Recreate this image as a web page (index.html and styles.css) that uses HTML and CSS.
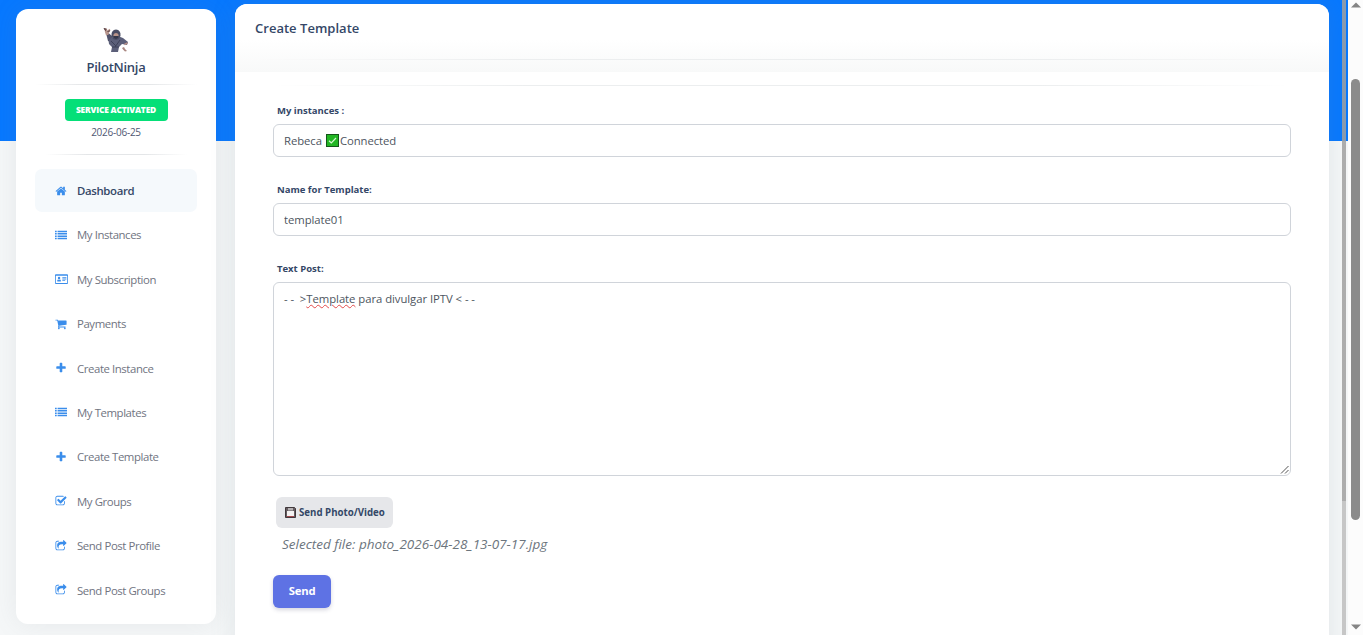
FILE: index.html
```html
<!DOCTYPE html>
<html lang="en">
  <head>
    <meta charset="UTF-8" />
    <meta name="viewport" content="width=device-width, initial-scale=1.0" />
    <title>PilotNinja - Create Template</title>
    <link rel="stylesheet" href="styles.css">
  </head>
  <body>
    <!-- icon set -->
    <svg class="icon-defs" width="0" height="0">
      <symbol id="i-home" viewBox="0 0 1792 1792"><path d="M1472 992v480q0 26-19 45t-45 19h-384v-384h-256v384h-384q-26 0-45-19t-19-45v-480q0-1 .5-3t.5-3l575-474 575 474q1 2 1 6zm223-69l-62 74q-8 9-21 11h-3q-13 0-21-7l-692-577-692 577q-12 8-24 7-13-2-21-11l-62-74q-8-10-7-23.5t11-21.5l719-599q32-26 76-26t76 26l244 204v-195q0-14 9-23t23-9h192q14 0 23 9t9 23v408l219 182q10 8 11 21.5t-7 23.5z"/></symbol>
      <symbol id="i-list" viewBox="0 0 1792 1792"><path d="M0 256h256v224H0zM384 256h1408v224H384zM0 608h256v224H0zM384 608h1408v224H384zM0 960h256v224H0zM384 960h1408v224H384zM0 1312h256v224H0zM384 1312h1408v224H384z"/></symbol>
      <symbol id="i-card" viewBox="0 0 2048 1792"><path fill-rule="evenodd" d="M152 128h1744q152 0 152 152v1232q0 152-152 152H152q-152 0-152-152V280q0-152 152-152zM128 384v1128q0 24 24 24h1744q24 0 24-24V384zM384 1280q-40 0-40-60 0-220 130-260 60 60 166 60t166-60q130 40 130 260 0 60-40 60zM640 560a192 192 0 1 1 0 384 192 192 0 0 1 0-384zM1152 576h640v128h-640zM1152 832h640v128h-640zM1152 1088h448v128h-448z"/></symbol>
      <symbol id="i-cart" viewBox="0 0 1792 1792"><path d="M704 1536q0 52-38 90t-90 38-90-38-38-90 38-90 90-38 90 38 38 90zm896 0q0 52-38 90t-90 38-90-38-38-90 38-90 90-38 90 38 38 90zm128-1088v512q0 24-16.500 42.500t-40.500 21.500l-1044 122q13 60 13 70 0 16-24 64h920q26 0 45 19t19 45-19 45-45 19h-1024q-26 0-45-19t-19-45q0-11 8-31.500t16-36 21.500-40 15.500-29.500l-177-823h-204q-26 0-45-19t-19-45 19-45 45-19h256q16 0 28.500 6.500t19.500 15.500 13 24.500 8 26 5.500 29.500 4.500 26h1201q26 0 45 19t19 45z"/></symbol>
      <symbol id="i-plus" viewBox="0 0 1792 1792"><path d="M1600 736v192q0 40-28 68t-68 28h-416v416q0 40-28 68t-68 28h-192q-40 0-68-28t-28-68v-416h-416q-40 0-68-28t-28-68v-192q0-40 28-68t68-28h416v-416q0-40 28-68t68-28h192q40 0 68 28t28 68v416h416q40 0 68 28t28 68z"/></symbol>
      <symbol id="i-check" viewBox="0 0 1792 1792"><path d="M1472 930v318q0 119-84.500 203.500t-203.500 84.500h-832q-119 0-203.500-84.500t-84.500-203.500v-832q0-119 84.500-203.500t203.500-84.500h832q63 0 117 25 15 7 18 23 3 17-9 29l-49 49q-10 10-23 10-3 0-9-2-23-6-45-6h-832q-66 0-113 47t-47 113v832q0 66 47 113t113 47h832q66 0 113-47t47-113v-254q0-13 9-22l64-64q10-10 23-10 6 0 12 3 20 8 20 29zm231-489l-814 814q-24 24-57 24t-57-24l-430-430q-24-24-24-57t24-57l110-110q24-24 57-24t57 24l263 263 647-647q24-24 57-24t57 24l110 110q24 24 24 57t-24 57z"/></symbol>
      <symbol id="i-share" viewBox="0 0 1792 1792"><path d="M1472 989v259q0 119-84.500 203.500t-203.500 84.500h-832q-119 0-203.500-84.500t-84.500-203.500v-832q0-119 84.500-203.500t203.500-84.500h255q13 0 22.500 9.500t9.500 22.500q0 27-26 32-77 26-133 60-10 4-16 4h-112q-66 0-113 47t-47 113v832q0 66 47 113t113 47h832q66 0 113-47t47-113v-214q0-19 18-29 28-13 54-37 16-16 35-8 21 9 21 31zm237-496l-384 384q-18 19-45 19-12 0-25-5-39-17-39-59v-192h-160q-323 0-438 131-119 137-74 473 3 23-20 34-8 2-12 2-16 0-26-13-10-14-21-31t-39.500-68.500-49.500-99.500-38.500-114-17.500-122q0-49 3.500-91t14-90 28-88 47-81.500 68.500-74 94.500-61.500 124.500-48.500 159.500-30.500 196.500-11h160v-192q0-42 39-59 13-5 25-5 26 0 45 19l384 384q19 19 19 45t-19 45z"/></symbol>
    </svg>

    <div class="page">
      <aside class="sidebar">
        <div class="brand">
          <svg class="ninja" viewBox="0 0 26 26">
            <path d="M9 9L5.500 6 3.500 8 5 14l5 3z" fill="#50536c"/>
            <path d="M1.500 2.500l2-1.500 1 2.500 2-1.800 1 1.500-1.500 2.500-.5 2-2.500.5-1-3z" fill="#b7958d"/>
            <path d="M1 1.500l2 .5-.5 1.500zM4.500 4.500l2.500-.7" stroke="#5b4144" fill="none"/>
            <path d="M8 11q-3 2-2 6l3 3-1 5h7l1-5 3-3 5 1 1-3-5-4q-3-1.500-7-2z" fill="#5b5f79"/>
            <path d="M8.500 9Q8 3 13 2.500q5 .5 4.500 6.500l-2 3-2.500 1-3-1z" fill="#4a4d63"/>
            <path d="M10.300 8q.7-2 2.700-2t2.700 2l-.5 1.500h-4.400z" fill="#b99489"/>
            <path d="M10.300 9h5.400q-.7 3-2.700 3t-2.700-3z" fill="#34374a"/>
            <path d="M8 14l5 5M17 13l-5 7M9 20h7" stroke="#3e425a" fill="none"/>
            <path d="M19 21l2-1 1 2 2 2-2 .5-2-2z" fill="#a98680"/>
            <path d="M21.500 17.500l3-1.500" stroke="#b58f88" stroke-width="1.500"/>
          </svg>
          <h1>PilotNinja</h1>
        </div>
        <hr class="fade-line">
        <div class="status">
          <span class="badge">SERVICE ACTIVATED</span>
          <span class="expires">2026-06-25</span>
        </div>
        <hr class="fade-line short">
        <nav class="menu">
          <a class="menu-item active"><svg><use href="#i-home"/></svg>Dashboard</a>
          <a class="menu-item"><svg><use href="#i-list"/></svg>My Instances</a>
          <a class="menu-item"><svg class="wide"><use href="#i-card"/></svg>My Subscription</a>
          <a class="menu-item"><svg><use href="#i-cart"/></svg>Payments</a>
          <a class="menu-item"><svg><use href="#i-plus"/></svg>Create Instance</a>
          <a class="menu-item"><svg><use href="#i-list"/></svg>My Templates</a>
          <a class="menu-item"><svg><use href="#i-plus"/></svg>Create Template</a>
          <a class="menu-item"><svg><use href="#i-check"/></svg>My Groups</a>
          <a class="menu-item"><svg><use href="#i-share"/></svg>Send Post Profile</a>
          <a class="menu-item"><svg><use href="#i-share"/></svg>Send Post Groups</a>
        </nav>
      </aside>

      <main class="card">
        <header class="card-header">
          <h2>Create Template</h2>
          <hr class="fade-line">
        </header>
        <form class="card-body">
          <hr class="fade-line">
          <label class="first">My instances :</label>
          <div class="field">Rebeca
            <svg class="tick" viewBox="0 0 13 13">
              <rect x=".5" y=".5" width="12" height="12" fill="#22b624" stroke="#14571a"/>
              <path d="M3 6.800l2.300 2.200L10 4" fill="none" stroke="#d8f5d2" stroke-width="1.200"/>
            </svg>Connected
          </div>
          <label>Name for Template:</label>
          <input class="field name-field" type="text" value="template01">
          <label>Text Post:</label>
          <div class="field text-post"><span>- -&nbsp; &gt;</span><span class="misspelled">Template</span> para divulgar IPTV &lt; - -
            <svg class="grip" viewBox="0 0 9 9"><path d="M1 8.500L8.500 1M5 8.500L8.500 5" stroke="#555" fill="none"/></svg>
          </div>
          <button type="button" class="upload">
            <svg viewBox="0 0 11 11">
              <path d="M.5.500h9l1 1v9H.5z" fill="#655c60" stroke="#40383c"/>
              <path d="M3 1h5v2.500H3z" fill="#b5b1b3"/>
              <path d="M2 4h7v5H2z" fill="#f4f2f2"/>
              <path d="M2 9.500h7" stroke="#a3464c"/>
            </svg>
            Send Photo/Video
          </button>
          <p class="selected-file">Selected file: photo_2026-04-28_13-07-17.jpg</p>
          <button type="button" class="send">Send</button>
        </form>
      </main>
      <div class="inner-scroll"></div>
    </div>

    <div class="scrollbar">
      <svg viewBox="0 0 10 6"><path d="M0 5.500L5 .5l5 5z"/></svg>
      <div class="thumb"></div>
      <svg class="down" viewBox="0 0 10 6"><path d="M0 .5h10l-5 5z"/></svg>
    </div>
  </body>
</html>
```
FILE: styles.css
```css
* {
  box-sizing: border-box;
}
body {
  margin: 0;
  height: 635px;
  display: flex;
  overflow: hidden;
  font-family: "Open Sans", sans-serif;
  color: #344767;
}
h1,
h2,
p {
  margin: 0;
}
.icon-defs {
  position: absolute;
}
.page {
  width: 1348px;
  height: 635px;
  display: flex;
  align-items: flex-start;
  overflow: hidden;
  background: linear-gradient(#0778ff 141px, #f5f7f8 141px);
}

/* sidebar */
.sidebar {
  width: 200px;
  height: 615px;
  margin: 9px 19px 0 16px;
  padding: 18px 19px 0;
  border-radius: 12px;
  background: #fff;
  box-shadow: 0 0 26px rgba(120, 135, 140, 0.12);
  flex-shrink: 0;
}
.brand {
  height: 57px;
  text-align: center;
}
.ninja {
  display: block;
  width: 26px;
  height: 26px;
  margin: 0 auto 5px;
}
.brand h1 {
  font-size: 13px;
  line-height: 18px;
  font-weight: 550;
  letter-spacing: -0.25px;
}
.fade-line {
  height: 1px;
  margin: 0;
  border: 0;
  background: linear-gradient(90deg, transparent, #e4e6e8 30%, #e4e6e8 70%, transparent);
}
.status {
  height: 69px;
  padding-top: 14px;
  display: flex;
  flex-direction: column;
  align-items: center;
}
.badge {
  width: 103px;
  height: 22px;
  border-radius: 4px;
  background: #05df78;
  color: #fff;
  font-size: 8.4px;
  line-height: 22px;
  font-weight: 800;
  letter-spacing: -0.17px;
  text-align: center;
}
.expires {
  margin-top: 4px;
  font-size: 10px;
  line-height: 15px;
  letter-spacing: -0.25px;
  color: #505873;
}
.short {
  margin: 0 10px;
}
.menu {
  padding-top: 14px;
}
.menu-item {
  display: flex;
  align-items: center;
  height: 43px;
  margin-bottom: 1.4px;
  padding-left: 20px;
  border-radius: 7px;
  color: #70747f;
  font-size: 11.4px;
  letter-spacing: -0.42px;
  width: 162px;
}
.menu-item svg {
  width: 12px;
  height: 12px;
  margin: 0 10px 0 0;
  fill: #3a8deb;
}
.menu-item svg.wide {
  width: 13px;
  margin-right: 9px;
}
.menu-item.active {
  background: #f5f9fc;
  color: #344767;
  font-weight: 550;
  letter-spacing: -0.35px;
}

/* main card */
.card {
  width: 1094px;
  height: 660px;
  margin-top: 4px;
  border-radius: 12px;
  background: #fff;
  box-shadow: 0 0 26px rgba(120, 135, 140, 0.16);
  flex-shrink: 0;
}
.card-header {
  height: 68px;
  padding: 15px 20px 0;
  border-radius: 12px 12px 0 0;
  background: linear-gradient(#fff 36px, #f8f9f9);
}
.card-header h2 {
  font-size: 13px;
  line-height: 19px;
  font-weight: 550;
  letter-spacing: 0.02px;
}
.card-header .fade-line {
  margin-top: 21px;
}
.card .fade-line {
  background: linear-gradient(90deg, transparent, #eceeef 25%, #eceeef 75%, transparent);
}
.card-body {
  height: 592px;
  padding: 13px 38px 0;
  border-radius: 12px;
  background: #fff;
}
label {
  display: block;
  height: 14px;
  margin: 26px 0 6px 4px;
  font-size: 9.5px;
  line-height: 14px;
  font-weight: 700;
}
label.first {
  margin-top: 18px;
}
.field {
  display: flex;
  align-items: center;
  width: 1018px;
  height: 33px;
  padding: 0 10px;
  border: 1px solid #d0d4da;
  border-radius: 6px;
  background: #fff;
  color: #4d5560;
  font-family: inherit;
  font-size: 11.3px;
  letter-spacing: -0.06px;
}
.tick {
  width: 13px;
  height: 13px;
  margin: 0 1px 0 4px;
}
.text-post {
  position: relative;
  display: block;
  height: 194px;
  padding-top: 7px;
  line-height: 17px;
  letter-spacing: -0.04px;
}
.misspelled {
  text-decoration: underline wavy #e34a4a 0.8px;
  text-underline-offset: 1px;
}
.grip {
  position: absolute;
  right: 1px;
  bottom: 1px;
  width: 9px;
  height: 9px;
}
.upload {
  display: flex;
  align-items: center;
  width: 117px;
  height: 31px;
  margin: 21px 0 0 3px;
  padding: 0 0 0 9px;
  border: 0;
  border-radius: 6px;
  background: #e6e7ea;
  color: #344767;
  font: 700 9.7px "Open Sans", sans-serif;
  white-space: nowrap;
}
.upload svg {
  width: 11px;
  height: 11px;
  margin-right: 3px;
}
.selected-file {
  margin: 6px 0 0 9px;
  font-size: 13.5px;
  line-height: 20px;
  font-style: italic;
  color: #6c757d;
}
.send {
  display: block;
  width: 58px;
  height: 33px;
  margin-top: 21px;
  padding: 0 0 2px;
  border: 0;
  border-radius: 6px;
  background: #5e72e4;
  box-shadow: 0 2px 4px rgba(50, 50, 93, 0.2);
  color: #fff;
  font: 700 11.3px "Open Sans", sans-serif;
  letter-spacing: -0.2px;
}

/* scrollbars */
.inner-scroll {
  width: 4px;
  height: 635px;
  margin-left: 13px;
  background: linear-gradient(rgba(160, 160, 160, 0.85) 501px, rgba(190, 190, 190, 0.85) 501px);
}
.scrollbar {
  width: 15px;
  height: 635px;
  padding: 2px 0 5px;
  display: flex;
  flex-direction: column;
  align-items: center;
  background: #fcfcfc;
}
.scrollbar svg {
  width: 10px;
  height: 6px;
  fill: #858585;
}
.thumb {
  width: 9px;
  height: 441px;
  margin-top: 71px;
  border-radius: 5px;
  background: #8b8b8b;
}
.scrollbar .down {
  margin-top: auto;
}
```
